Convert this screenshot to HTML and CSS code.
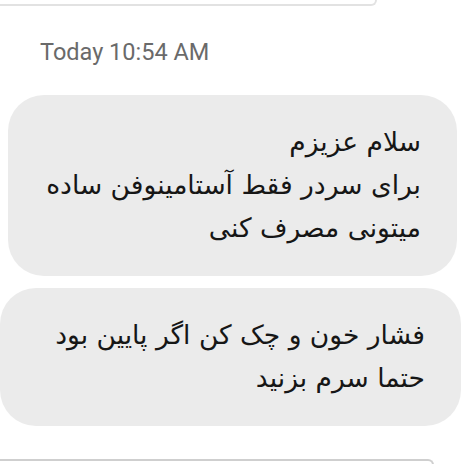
FILE: index.html
```html
<!DOCTYPE html>
<html lang="fa">
<head>
  <meta charset="UTF-8">
  <meta name="viewport" content="width=device-width, initial-scale=1.0">
  <title>Messages</title>
  <link rel="stylesheet" href="styles.css">
</head>
<body>
  <!-- pieza del mensaje anterior -->
  <div class="prev-bubble"></div>

  <div class="time">Today 10:54 AM</div>

  <div class="bubble first" dir="rtl">
    سلام عزیزم<br>
    برای سردر فقط آستامینوفن ساده<br>
    میتونی مصرف کنی
  </div>

  <div class="bubble second" dir="rtl">
    فشار خون و چک کن اگر پایین بود<br>
    حتما سرم بزنید
  </div>

  <!-- pieza del mensaje siguiente -->
  <div class="next-bubble"></div>
</body>
</html>
```

FILE: styles.css
```css
/* Estilos básicos */
body {
  margin: 0;
  background: #fff;
  overflow: hidden;
  height: 464px;
}
.prev-bubble {
  width: 385px;
  height: 4px;
  margin-left: -12px;
  border: 2px solid #e2e2e2;
  border-top: none;
  border-radius: 0 0 32px 32px;
}
.time {
  margin-top: 33px;
  padding-left: 40px;
  font-family: Roboto, sans-serif;
  font-size: 23.5px;
  color: #6a6a6a;
  line-height: 26px;
}
.bubble {
  background-color: #ebebeb;
  border-radius: 36px;
  padding: 25px 36px 27px 30px;
  font-family: "DejaVu Sans", sans-serif;
  font-size: 26.5px;
  line-height: 43px;
  color: #161616;
  text-align: right;
}
.first {
  margin-top: 30px;
  margin-left: 8px;
  width: 383px;
}
.second {
  margin-top: 12px;
  margin-left: 0;
  width: 395px;
}
.next-bubble {
  width: 442px;
  height: 4px;
  margin-top: 33px;
  margin-left: -12px;
  border: 2px solid #cfcfcf;
  border-bottom: none;
  border-radius: 32px 32px 0 0;
}
```
